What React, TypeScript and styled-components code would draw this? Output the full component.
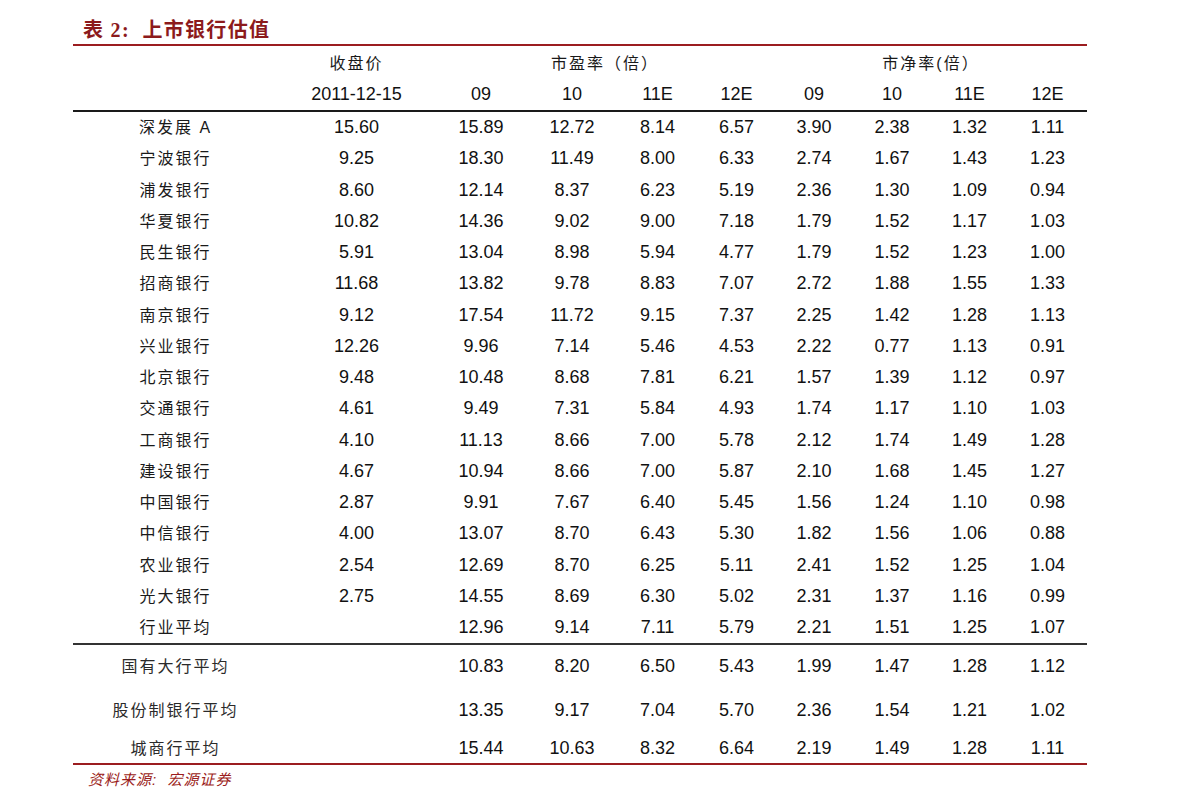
import * as React from 'react'
import styled, { createGlobalStyle } from 'styled-components'

const GlobalStyle = createGlobalStyle`
  html, body {
    margin: 0;
    padding: 0;
    background: #ffffff;
  }
  body {
    font-family: "Liberation Sans", "Noto Sans CJK SC", sans-serif;
    color: #111;
  }
`

const colors = {
  red: '#9b1d20',
  title: '#8c1a1c',
  ink: '#111111',
  rule: '#1a1a1a',
  mid: '#333333',
}

const COLUMNS = '205px 157px 92px 90px 81px 77px 78px 78px 77px 79px'

const Page = styled.div`
  width: 1014px;
  padding: 16px 0 0 73px;
`

const Title = styled.h2`
  margin: 0;
  padding-left: 10px;
  height: 28px;
  line-height: 28px;
  font-family: "Liberation Serif", "Noto Sans CJK SC", serif;
  font-size: 20px;
  font-weight: 700;
  letter-spacing: 1.3px;
  color: ${colors.title};
  border-bottom: 2px solid ${colors.red};
`

const Row = styled.div<{ $height: number; $rule?: string }>`
  display: grid;
  grid-template-columns: ${COLUMNS};
  height: ${p => p.$height}px;
  border-bottom: ${p => (p.$rule ? `2px solid ${p.$rule}` : 'none')};
  box-sizing: ${p => (p.$rule ? 'border-box' : 'content-box')};
`

const Cell = styled.div<{ $span?: number }>`
  grid-column: span ${p => p.$span ?? 1};
  display: flex;
  align-items: center;
  justify-content: center;
  font-size: 18px;
  color: ${colors.ink};
  white-space: nowrap;
`

const HeadLabel = styled(Cell)`
  font-size: 16px;
  letter-spacing: 2px;
  color: #1a1a1a;
`

const NameCell = styled(HeadLabel)`
  padding-bottom: 3px;
`

const GroupLabel = styled(NameCell)`
  color: #2a2a2a;
`

const Source = styled.p`
  margin: 5px 0 0 15px;
  line-height: 20px;
  font-size: 15px;
  font-style: italic;
  letter-spacing: 1px;
  color: ${colors.red};
`

type Line = [string, string, ...string[]]

const banks: Line[] = [
  ['深发展 A', '15.60', '15.89', '12.72', '8.14', '6.57', '3.90', '2.38', '1.32', '1.11'],
  ['宁波银行', '9.25', '18.30', '11.49', '8.00', '6.33', '2.74', '1.67', '1.43', '1.23'],
  ['浦发银行', '8.60', '12.14', '8.37', '6.23', '5.19', '2.36', '1.30', '1.09', '0.94'],
  ['华夏银行', '10.82', '14.36', '9.02', '9.00', '7.18', '1.79', '1.52', '1.17', '1.03'],
  ['民生银行', '5.91', '13.04', '8.98', '5.94', '4.77', '1.79', '1.52', '1.23', '1.00'],
  ['招商银行', '11.68', '13.82', '9.78', '8.83', '7.07', '2.72', '1.88', '1.55', '1.33'],
  ['南京银行', '9.12', '17.54', '11.72', '9.15', '7.37', '2.25', '1.42', '1.28', '1.13'],
  ['兴业银行', '12.26', '9.96', '7.14', '5.46', '4.53', '2.22', '0.77', '1.13', '0.91'],
  ['北京银行', '9.48', '10.48', '8.68', '7.81', '6.21', '1.57', '1.39', '1.12', '0.97'],
  ['交通银行', '4.61', '9.49', '7.31', '5.84', '4.93', '1.74', '1.17', '1.10', '1.03'],
  ['工商银行', '4.10', '11.13', '8.66', '7.00', '5.78', '2.12', '1.74', '1.49', '1.28'],
  ['建设银行', '4.67', '10.94', '8.66', '7.00', '5.87', '2.10', '1.68', '1.45', '1.27'],
  ['中国银行', '2.87', '9.91', '7.67', '6.40', '5.45', '1.56', '1.24', '1.10', '0.98'],
  ['中信银行', '4.00', '13.07', '8.70', '6.43', '5.30', '1.82', '1.56', '1.06', '0.88'],
  ['农业银行', '2.54', '12.69', '8.70', '6.25', '5.11', '2.41', '1.52', '1.25', '1.04'],
  ['光大银行', '2.75', '14.55', '8.69', '6.30', '5.02', '2.31', '1.37', '1.16', '0.99'],
  ['行业平均', '', '12.96', '9.14', '7.11', '5.79', '2.21', '1.51', '1.25', '1.07'],
]

const groups: { line: Line; height: number }[] = [
  { line: ['国有大行平均', '', '10.83', '8.20', '6.50', '5.43', '1.99', '1.47', '1.28', '1.12'], height: 42 },
  { line: ['股份制银行平均', '', '13.35', '9.17', '7.04', '5.70', '2.36', '1.54', '1.21', '1.02'], height: 46 },
  { line: ['城商行平均', '', '15.44', '10.63', '8.32', '6.64', '2.19', '1.49', '1.28', '1.11'], height: 32 },
]

const years = ['2011-12-15', '09', '10', '11E', '12E', '09', '10', '11E', '12E']

export default function App() {
  return (
    <Page>
      <GlobalStyle />
      <Title>表 2:&nbsp; 上市银行估值</Title>

      <Row $height={32}>
        <Cell />
        <HeadLabel>收盘价</HeadLabel>
        <HeadLabel $span={4}>市盈率（倍）</HeadLabel>
        <HeadLabel $span={4}>市净率(倍）</HeadLabel>
      </Row>
      <Row $height={34} $rule={colors.rule}>
        <Cell />
        {years.map((y, i) => (
          <Cell key={i}>{y}</Cell>
        ))}
      </Row>

      {banks.map(([name, ...values], r) => (
        <Row
          key={name}
          $height={r === banks.length - 1 ? 33.25 : 31.25}
          $rule={r === banks.length - 1 ? colors.mid : undefined}
        >
          <NameCell>{name}</NameCell>
          {values.map((v, i) => (
            <Cell key={i}>{v}</Cell>
          ))}
        </Row>
      ))}

      {groups.map(({ line: [name, ...values], height }, r) => (
        <Row
          key={name}
          $height={height}
          $rule={r === groups.length - 1 ? colors.red : undefined}
        >
          <GroupLabel>{name}</GroupLabel>
          {values.map((v, i) => (
            <Cell key={i}>{v}</Cell>
          ))}
        </Row>
      ))}

      <Source>资料来源:&nbsp; 宏源证券</Source>
    </Page>
  )
}
